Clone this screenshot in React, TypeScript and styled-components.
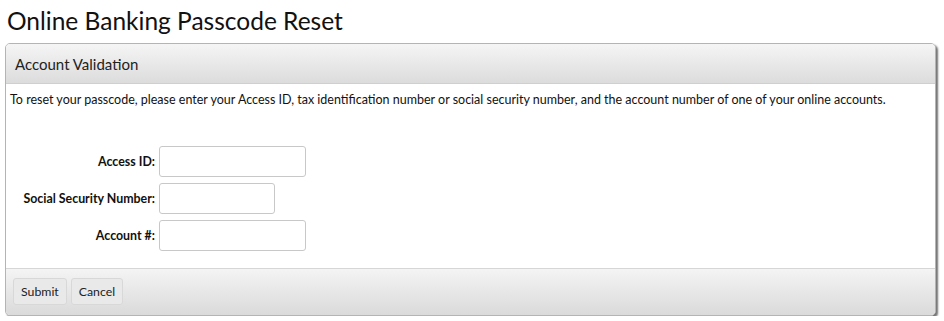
import React from "react";
import styled, { createGlobalStyle } from "styled-components";

const GlobalStyle = createGlobalStyle`
  html, body {
    margin: 0;
    padding: 0;
    background: #fff;
  }
  body {
    font-family: "Lato", "Open Sans", sans-serif;
    color: #1a1a1a;
  }
`;

const Page = styled.div`
  padding: 0 8px 0 5px;
`;

const Title = styled.h1`
  margin: 0;
  padding: 6px 0 0 2px;
  height: 43px;
  box-sizing: border-box;
  font-size: 24.5px;
  font-weight: 400;
  line-height: 30px;
  color: #111;
`;

const Panel = styled.div`
  width: 931px;
  box-sizing: border-box;
  border: 1px solid #b4b4b4;
  border-radius: 5px;
  box-shadow: 2px 2px 2px rgba(0, 0, 0, 0.55);
  overflow: hidden;
  background: #fff;
`;

const PanelHeader = styled.div`
  height: 40px;
  box-sizing: border-box;
  display: flex;
  align-items: center;
  padding: 0 9px;
  background: linear-gradient(#f5f5f5, #dcdcdc);
  border-bottom: 1px solid #cfcfcf;
  font-size: 15px;
  color: #222;
`;

const PanelBody = styled.div`
  padding: 7px 4px 17px 4px;
`;

const Intro = styled.p`
  margin: 0 0 37px 0;
  font-size: 12.5px;
  line-height: 18px;
  color: #111;
`;

const Form = styled.div`
  display: grid;
  grid-template-columns: 145px auto;
  column-gap: 4px;
  row-gap: 6px;
  align-items: center;
`;

const Label = styled.label`
  text-align: right;
  font-size: 12.4px;
  font-weight: 700;
  color: #111;
`;

const Input = styled.input<{ $width: number }>`
  width: ${(p) => p.$width}px;
  height: 31px;
  box-sizing: border-box;
  border: 1px solid #c8c8c8;
  border-radius: 3px;
  background: #fff;
  padding: 0 6px;
  font: inherit;
  outline: none;
`;

const PanelFooter = styled.div`
  display: flex;
  gap: 4px;
  padding: 9px 7px 10px;
  background: linear-gradient(#f4f4f4, #dadada);
  border-top: 1px solid #d6d6d6;
`;

const Button = styled.button`
  height: 27px;
  padding: 0 7px;
  border: 1px solid #d8d8d8;
  border-radius: 3px;
  background: #e9e9e9;
  font-family: inherit;
  font-size: 12.3px;
  color: #222;
  cursor: pointer;
`;

const fields = [
  { label: "Access ID:", width: 147 },
  { label: "Social Security Number:", width: 116 },
  { label: "Account #:", width: 147 },
];

export default function App() {
  return (
    <>
      <GlobalStyle />
      <Page>
        <Title>Online Banking Passcode Reset</Title>
        <Panel>
          <PanelHeader>Account Validation</PanelHeader>
          <PanelBody>
            <Intro>
              To reset your passcode, please enter your Access ID, tax
              identification number or social security number, and the account
              number of one of your online accounts.
            </Intro>
            <Form>
              {fields.map((f) => (
                <React.Fragment key={f.label}>
                  <Label>{f.label}</Label>
                  <div>
                    <Input type="text" $width={f.width} />
                  </div>
                </React.Fragment>
              ))}
            </Form>
          </PanelBody>
          <PanelFooter>
            <Button type="button">Submit</Button>
            <Button type="button">Cancel</Button>
          </PanelFooter>
        </Panel>
      </Page>
    </>
  );
}
